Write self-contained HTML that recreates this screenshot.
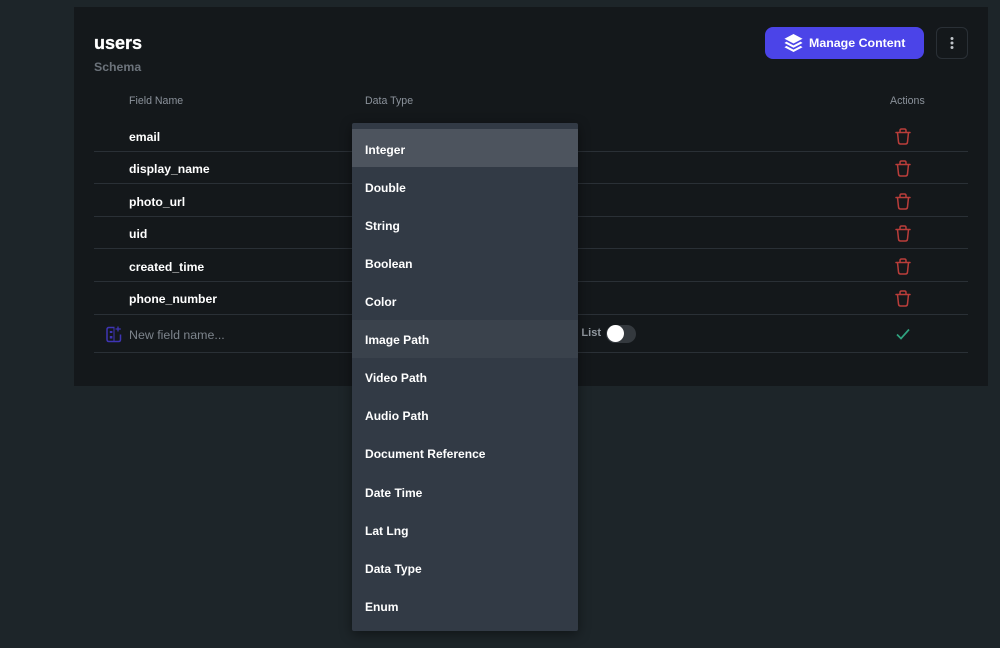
<!DOCTYPE html>
<html><head><meta charset="utf-8"><style>
html,body{margin:0;padding:0}
body{width:1000px;height:648px;background:#1d2529;overflow:hidden;position:relative;font-family:"Liberation Sans",sans-serif}
div,span{position:absolute;white-space:nowrap}
svg{position:absolute;overflow:visible}
.t{font-weight:700;color:#fff;font-size:12.2px;line-height:16px;left:129px}
.h{font-size:10.6px;line-height:14px;color:#8b929b}
.l{position:absolute;left:94px;width:874px;height:1px;background:#2a3036}
.m{position:absolute;left:365px;font-weight:700;color:#fff;font-size:12.05px;line-height:16px}
</style></head><body>
<div style="left:74px;top:7px;width:914px;height:379px;background:#14181b"></div>
<div style="left:94px;top:33px;font-size:18px;line-height:20px;font-weight:700;color:#fff;-webkit-text-stroke:.3px #fff">users</div>
<div style="left:94px;top:59px;font-size:12.3px;line-height:16px;font-weight:700;color:#6c737b">Schema</div>
<div style="left:765px;top:27px;width:159px;height:32px;background:#4b44e8;border-radius:8px"></div>
<svg style="left:784px;top:34px" width="19" height="19" viewBox="0 0 20 20"><path d="M10 0L19.500 5 10 10 .5 5Z" fill="#fff"/><path d="M2.500 8L.5 9.500 10 14.500 19.500 9.500 17.500 8 10 12Z" fill="#fff"/><path d="M2.500 12.500L.5 14 10 19 19.500 14 17.500 12.500 10 16.500Z" fill="#fff"/></svg>
<div style="left:809px;top:35px;font-size:12.4px;line-height:16px;font-weight:700;color:#fff">Manage Content</div>
<div style="left:936px;top:27px;width:30px;height:30px;border:1px solid #2a3036;border-radius:6px"></div>
<svg style="left:936px;top:27px" width="32" height="32"><circle cx="16" cy="11.500" r="1.500" fill="#bfc4c9"/><circle cx="16" cy="16" r="1.500" fill="#bfc4c9"/><circle cx="16" cy="20.500" r="1.500" fill="#bfc4c9"/></svg>

<div class="h" style="left:129px;top:94px">Field Name</div>
<div class="h" style="left:365px;top:94px">Data Type</div>
<div class="h" style="left:890px;top:94px">Actions</div>

<div class="t" style="top:129px">email</div>
<div class="t" style="top:161px">display_name</div>
<div class="t" style="top:194px">photo_url</div>
<div class="t" style="top:226px">uid</div>
<div class="t" style="top:259px">created_time</div>
<div class="t" style="top:291px">phone_number</div>
<div class="t" style="top:327px;color:#7d848c;font-weight:400;font-size:12.4px">New field name...</div>

<span class="l" style="top:151px"></span>
<span class="l" style="top:183px"></span>
<span class="l" style="top:216px"></span>
<span class="l" style="top:248px"></span>
<span class="l" style="top:281px"></span>
<span class="l" style="top:314px"></span>
<span class="l" style="top:352px"></span>

<svg width="0" height="0"><defs><g id="tr" fill="none" stroke="#b93d3a" stroke-width="1.500" stroke-linecap="round" stroke-linejoin="round"><path d="M1 4.500H15M5 4.500V2.500Q5 1 6.500 1H9.500Q11 1 11 2.500V4.500M2.500 4.500L3.500 14Q3.700 16 5.500 16H10.500Q12.300 16 12.500 14L13.500 4.500"/></g></defs></svg>
<svg style="left:895px;top:128px" width="16" height="17"><use href="#tr"/></svg>
<svg style="left:895px;top:160px" width="16" height="17"><use href="#tr"/></svg>
<svg style="left:895px;top:193px" width="16" height="17"><use href="#tr"/></svg>
<svg style="left:895px;top:225px" width="16" height="17"><use href="#tr"/></svg>
<svg style="left:895px;top:258px" width="16" height="17"><use href="#tr"/></svg>
<svg style="left:895px;top:290px" width="16" height="17"><use href="#tr"/></svg>

<svg style="left:106px;top:326px" width="16" height="17" viewBox="0 0 16 17" fill="none" stroke="#3f35b5" stroke-width="1.500"><path d="M8.500 1.500H3Q1 1.500 1 3.500V13.500Q1 15.500 3 15.500H12.500Q14.500 15.500 14.500 13.500V8.500"/><rect x="3.800" y="5" width="2.600" height="2" fill="#3f35b5" stroke="none"/><rect x="3.800" y="10" width="2.600" height="2.500" fill="#3f35b5" stroke="none"/><path d="M8 1.500V15.500" stroke-width="1"/><path d="M12 .5V5.500M9.500 3H14.800" stroke-width="1.300"/></svg>

<svg style="left:896px;top:328px" width="14" height="12"><path d="M1 6.500L5 10.500 13 1.500" fill="none" stroke="#2fa37f" stroke-width="1.700"/></svg>

<div style="right:399px;top:326px;font-size:11px;line-height:14px;font-weight:700;color:#9299a0">Is List</div>
<div style="left:606px;top:325px;width:30px;height:18px;border-radius:9px;background:#34393e"></div>
<div style="left:607px;top:325px;width:17px;height:17px;border-radius:50%;background:#fff"></div>

<div style="left:352px;top:123px;width:226px;height:508px;background:#323a45;border-radius:2px;box-shadow:0 3px 12px rgba(0,0,0,.45)"></div>
<div style="left:352px;top:129px;width:226px;height:38px;background:#4d545e"></div>
<div style="left:352px;top:320px;width:226px;height:38px;background:#3a424c"></div>
<div class="m" style="top:142px">Integer</div>
<div class="m" style="top:180px">Double</div>
<div class="m" style="top:218px">String</div>
<div class="m" style="top:256px">Boolean</div>
<div class="m" style="top:294px">Color</div>
<div class="m" style="top:332px">Image Path</div>
<div class="m" style="top:370px">Video Path</div>
<div class="m" style="top:408px">Audio Path</div>
<div class="m" style="top:446px">Document Reference</div>
<div class="m" style="top:485px">Date Time</div>
<div class="m" style="top:523px">Lat Lng</div>
<div class="m" style="top:561px">Data Type</div>
<div class="m" style="top:599px">Enum</div>
</body></html>
